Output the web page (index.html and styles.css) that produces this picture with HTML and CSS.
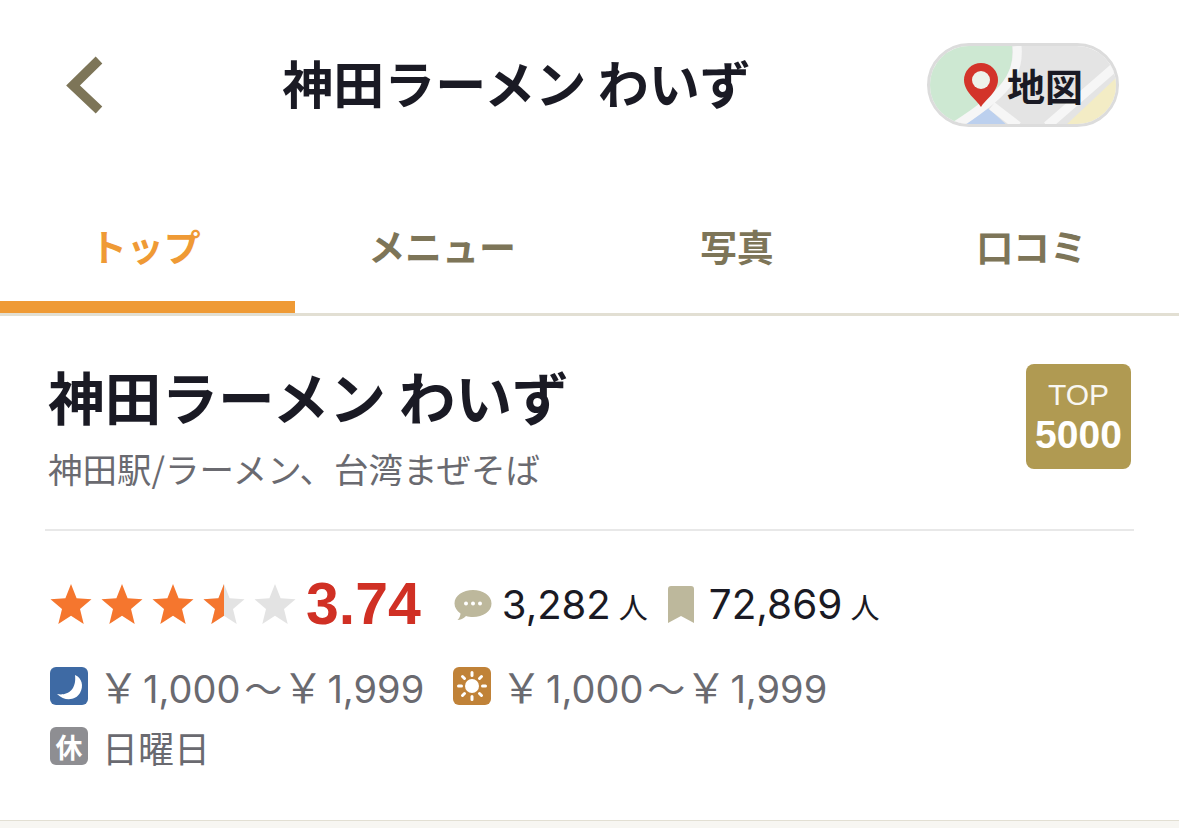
FILE: index.html
```html
<!DOCTYPE html>
<html lang="ja">
<head>
  <meta charset="UTF-8">
  <meta name="viewport" content="width=device-width, initial-scale=1.0">
  <title>神田ラーメン わいず</title>
  <link rel="stylesheet" href="styles.css">
</head>
<body>

  <!-- header -->
  <header class="header">
    <svg class="back" width="40" height="60" viewBox="0 0 40 60">
      <path d="M35 5 L9 30.500 L35 55" fill="none" stroke="#7d7558" stroke-width="9.500"/>
    </svg>
    <h1 class="header-title">神田ラーメン わいず</h1>
    <div class="map-btn">
      <svg class="map-bg" viewBox="0 0 186 78" preserveAspectRatio="none">
        <rect width="186" height="78" fill="#e4e4e4"/>
        <path d="M0 0H82C85 30 70 45 20 80H0Z" fill="#cde8d2"/>
        <path d="M33 80L58 62L78 80Z" fill="#bcd0ee"/>
        <path d="M135 80L188 30V80Z" fill="#f3ecc5"/>
        <path d="M87 0C90 30 75 48 25 80M62 60L88 80M117 80L186 20" fill="none" stroke="#f6f6f6" stroke-width="9"/>
      </svg>
      <svg class="pin" width="36" height="44" viewBox="0 0 36 44">
        <path d="M18 44C14 37 1 29 1 17A17 17 0 0 1 35 17C35 29 22 37 18 44Z" fill="#d3342a"/>
        <circle cx="18" cy="17" r="9" fill="#eef2ea"/>
      </svg>
      <span class="map-label">地図</span>
    </div>
  </header>

  <!-- tabs -->
  <nav class="tabs">
    <div class="tab active">トップ</div>
    <div class="tab">メニュー</div>
    <div class="tab">写真</div>
    <div class="tab">口コミ</div>
  </nav>

  <!-- shop info -->
  <section class="info">
    <div class="info-top">
      <div>
        <h2 class="shop-name">神田ラーメン わいず</h2>
        <p class="shop-sub">神田駅/ラーメン、台湾まぜそば</p>
      </div>
      <div class="badge">
        <span class="badge-top">TOP</span>
        <span class="badge-num">5000</span>
      </div>
    </div>

    <div class="rating-row">
      <div class="stars">
        <svg width="44" height="44" viewBox="0 0 44 44"><path class="star-on" d="M22 2L27.600 16.300L42.500 17.300L31 27L34.700 42L22 33.800L9.300 42L13 27L1.500 17.300L16.400 16.300Z"/></svg>
        <svg width="44" height="44" viewBox="0 0 44 44"><path class="star-on" d="M22 2L27.600 16.300L42.500 17.300L31 27L34.700 42L22 33.800L9.300 42L13 27L1.500 17.300L16.400 16.300Z"/></svg>
        <svg width="44" height="44" viewBox="0 0 44 44"><path class="star-on" d="M22 2L27.600 16.300L42.500 17.300L31 27L34.700 42L22 33.800L9.300 42L13 27L1.500 17.300L16.400 16.300Z"/></svg>
        <svg width="44" height="44" viewBox="0 0 44 44">
          <path class="star-off" d="M22 2L27.600 16.300L42.500 17.300L31 27L34.700 42L22 33.800L9.300 42L13 27L1.500 17.300L16.400 16.300Z"/>
          <path class="star-on" d="M22 2V33.800L9.300 42L13 27L1.500 17.300L16.400 16.300Z"/>
        </svg>
        <svg width="44" height="44" viewBox="0 0 44 44"><path class="star-off" d="M22 2L27.600 16.300L42.500 17.300L31 27L34.700 42L22 33.800L9.300 42L13 27L1.500 17.300L16.400 16.300Z"/></svg>
      </div>
      <span class="score">3.74</span>
      <svg class="count-icon" width="38" height="32" viewBox="0 0 38 32">
        <path d="M19 1C29 1 37.500 6.500 37.500 14.500C37.500 22.500 29 28 19 28C16.500 28 14 27.600 12 27C9.500 29.500 6.500 31 3.500 31C5.500 29 6.500 26.500 6.500 24.500C3 22 .5 18.500 .5 14.500C.5 6.500 9 1 19 1Z" fill="#bdb89c"/>
        <circle cx="12" cy="14.500" r="2" fill="#fff"/><circle cx="19" cy="14.500" r="2" fill="#fff"/><circle cx="26" cy="14.500" r="2" fill="#fff"/>
      </svg>
      <span class="count">3,282<small>人</small></span>
      <svg class="mark-icon" width="26" height="38" viewBox="0 0 26 38">
        <path d="M3 0H23A3 3 0 0 1 26 3V37L13 30L0 37V3A3 3 0 0 1 3 0Z" fill="#bdb89c"/>
      </svg>
      <span class="count count-wide">72,869<small>人</small></span>
    </div>

    <div class="price-row">
      <span class="ico ico-night">
        <svg width="38" height="38" viewBox="0 0 38 38"><path d="M25 8C32 11 34 19 30 26C26 33 15 35 7 27C16 29 27 24 25 8Z" fill="#fff"/></svg>
      </span>
      <span class="price"><span class="yen">￥</span>1,000<span class="wave">～</span><span class="yen">￥</span>1,999</span>
      <span class="ico ico-day">
        <svg width="30" height="30" viewBox="0 0 30 30">
          <circle cx="15" cy="15" r="7" fill="#fff"/>
          <path d="M15 1.500V4.500M15 25.500V28.500M1.500 15H4.500M25.500 15H28.500M5.500 5.500L7.500 7.500M22.500 22.500L24.500 24.500M5.500 24.500L7.500 22.500M22.500 7.500L24.500 5.500" stroke="#fff" stroke-width="3" stroke-linecap="round"/>
        </svg>
      </span>
      <span class="price"><span class="yen">￥</span>1,000<span class="wave">～</span><span class="yen">￥</span>1,999</span>
    </div>

    <div class="closed-row">
      <span class="ico ico-closed">休</span>
      <span class="closed-day">日曜日</span>
    </div>
  </section>

  <div class="bottom-band"></div>

</body>
</html>
```

FILE: styles.css
```css
* { box-sizing: border-box; }
body {
  margin: 0;
  background: #fff;
  font-family: "Noto Sans CJK JP", "Inter", sans-serif;
  color: #1a1a24;
  height: 828px;
  overflow: hidden;
}
h1, h2, p { margin: 0; }

.header {
  height: 170px;
  display: flex;
  align-items: center;
  padding: 0 60px 0 64px;
}
.header-title {
  flex: 1;
  text-align: center;
  font-size: 51px;
  font-weight: 700;
  line-height: 1;
  padding-bottom: 5px;
  padding-left: 2px;
}
.map-btn {
  width: 192px;
  height: 84px;
  border: 3px solid #dcdcdc;
  border-radius: 42px;
  overflow: hidden;
  position: relative;
  display: flex;
  align-items: center;
  padding-left: 33px;
  gap: 8px;
}
.map-bg { position: absolute; left: 0; top: 0; width: 100%; height: 100%; }
.pin, .map-label { position: relative; }
.map-label { font-size: 38px; font-weight: 700; line-height: 1; }

.tabs {
  height: 146px;
  display: flex;
  border-bottom: 3px solid #e2dfd3;
}
.tab {
  flex: 1;
  text-align: center;
  padding-top: 51px;
  font-size: 37px;
  line-height: 50px;
  font-weight: 700;
  color: #7d7558;
}
.tab.active {
  color: #ef9a35;
  border-bottom: 12px solid #ef9a35;
  text-indent: -4px;
}

.info { padding: 48px 45px 0; }
.info-top {
  display: flex;
  justify-content: space-between;
  padding: 0 3px;
  height: 165px;
}
.shop-name { font-size: 56.700px; line-height: 70px; font-weight: 700; margin-top: -4px; }
.shop-sub { font-size: 34.500px; line-height: 46px; color: #6a6a70; margin-top: 15px; }
.badge {
  width: 105px;
  height: 105px;
  border-radius: 8px;
  background: #b09a52;
  color: #fff;
  font-family: "Liberation Sans", sans-serif;
  display: flex;
  flex-direction: column;
  align-items: center;
  justify-content: center;
}
.badge-top { font-size: 30px; line-height: 36px; opacity: .92; }
.badge-num { font-size: 39px; line-height: 44px; font-weight: 700; }

.rating-row {
  border-top: 2px solid #e8e8e8;
  padding: 44px 4px 0;
  display: flex;
  align-items: center;
  height: 106px;
}
.stars { display: flex; gap: 7px; margin-top: -2px; }
.star-on { fill: #f5762e; }
.star-off { fill: #e3e3e3; }
.score {
  font-family: "Liberation Sans", sans-serif;
  font-size: 59px;
  font-weight: 700;
  color: #d03024;
  margin: -3px 0 0 9px;
  line-height: 60px;
}
.count-icon { margin-left: 33px; }
.count {
  font-family: "Inter", sans-serif;
  font-size: 40px;
  margin-left: 10px;
  line-height: 60px;
}
.count small {
  font-family: "Noto Sans CJK JP", sans-serif;
  font-size: 29px;
  margin-left: 8px;
}
.count-wide { font-size: 40.500px; margin-left: 15px; }
.mark-icon { margin-left: 20px; }

.price-row, .closed-row {
  display: flex;
  align-items: center;
  padding: 0 5px;
  color: #6a6a70;
  height: 50px;
}
.price-row { margin-top: 26px; }
.closed-row { margin-top: 10px; }
.price {
  font-family: "Inter", "Noto Sans CJK JP", sans-serif;
  font-size: 38px;
  line-height: 50px;
  margin-left: 10px;
  padding-top: 4px;
}
.price-row .price:nth-child(2) { width: 355px; }
.yen {
  font-family: "Noto Sans CJK JP", sans-serif;
  font-size: 41px;
  line-height: 1;
  margin-right: 4px;
}
.wave { font-family: "Noto Sans CJK JP", sans-serif; margin-left: 4px; }
.closed-day { font-size: 36px; line-height: 50px; margin-left: 14px; padding-top: 2px; }
.ico {
  width: 38px;
  height: 38px;
  border-radius: 6px;
  display: flex;
  align-items: center;
  justify-content: center;
  flex: none;
}
.ico-night { background: #3e6aa4; }
.ico-day { background: #c08238; }
.ico-closed {
  background: #8e8e92;
  color: #fff;
  font-size: 27px;
  font-weight: 700;
  line-height: 1;
}
.bottom-band {
  position: absolute;
  left: 0;
  right: 0;
  top: 820px;
  height: 8px;
  background: #f7f6f2;
  border-top: 1px solid #e2dfd3;
}
```
